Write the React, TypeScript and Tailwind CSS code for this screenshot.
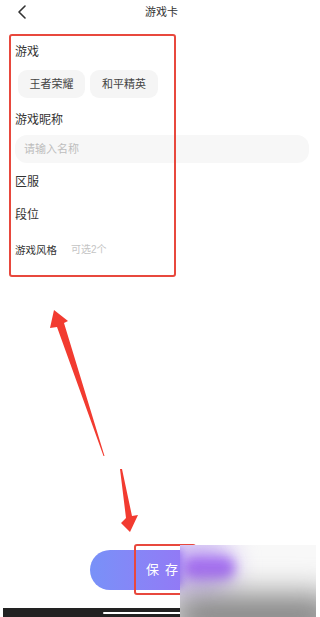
import React from "react";

const font = { fontFamily: '"Liberation Sans", "Noto Sans CJK SC", sans-serif' };

export default function App() {
  return (
    <div className="relative w-[316px] h-[617px] bg-white overflow-hidden flex flex-col" style={font}>
      {/* header */}
      <div className="h-[24px] flex items-center relative shrink-0">
        <svg className="ml-[17px]" width="10" height="14" viewBox="0 0 10 14">
          <path d="M8 1 L2 7 L8 13" fill="none" stroke="#333" strokeWidth="1.6" strokeLinecap="round" strokeLinejoin="round" />
        </svg>
        <div className="absolute left-[145px] top-0 h-[24px] flex items-center text-[11px] text-[#333]">游戏卡</div>
      </div>

      <div className="pl-[15px] pr-[7px] flex flex-col">
        <div className="mt-[20px] h-[16px] leading-[16px] text-[12px] text-[#333]">游戏</div>
        <div className="mt-[10px] flex gap-[5px] pl-[3px]">
          <div className="w-[67px] h-[28px] rounded-[9px] bg-[#f5f5f5] flex items-center justify-center text-[11px] text-[#444]">王者荣耀</div>
          <div className="w-[68px] h-[28px] rounded-[9px] bg-[#f5f5f5] flex items-center justify-center text-[11px] text-[#444]">和平精英</div>
        </div>
        <div className="mt-[14px] h-[16px] leading-[16px] text-[12px] text-[#333]">游戏昵称</div>
        <div className="mt-[7px] h-[28px] rounded-[12px] bg-[#f7f7f7] flex items-center pl-[9px] text-[11px] text-[#bdbdbd]">请输入名称</div>
        <div className="mt-[11px] h-[16px] leading-[16px] text-[12px] text-[#333]">区服</div>
        <div className="mt-[17px] h-[16px] leading-[16px] text-[12px] text-[#333]">段位</div>
        <div className="mt-[19px] h-[16px] leading-[16px] flex items-center">
          <span className="text-[10.5px] text-[#333]">游戏风格</span>
          <span className="ml-[14px] text-[10px] text-[#c4c4c4]">可选2个</span>
        </div>
      </div>

      {/* save button */}
      <div className="mt-[292px] h-[40px] flex pl-[90px]">
        <div className="w-[144px] h-[40px] rounded-full bg-gradient-to-r from-[#7891f8] to-[#9d6bf4] flex items-center justify-center text-white text-[13px] tracking-[6px] pl-[6px]">
          保存
        </div>
      </div>

      {/* bottom bar */}
      <div className="mt-[18px] h-[9px] ml-[3px] w-[200px] bg-[#222] flex items-center">
        <div className="ml-[100px] w-[100px] h-[2px] bg-white rounded-full" />
      </div>

      {/* red highlight boxes */}
      <div className="absolute left-[9px] top-[34px] w-[167px] h-[243px] border-2 border-[#e8483d] rounded-[3px]" />
      <div className="absolute left-[134px] top-[544px] w-[62px] h-[51px] border-2 border-[#e8483d] rounded-[3px]" />

      {/* arrows */}
      <svg className="absolute left-0 top-0" width="316" height="617" viewBox="0 0 316 617">
        <polygon points="54,310 68,321 64,323 104.5,456 103.5,456 57,327 50,328" fill="#f23b30" />
        <polygon points="120,469 122,469 132,516 138,515 130,532 121,523 126,518" fill="#f23b30" />
      </svg>

      {/* blurred watermark area */}
      <div className="absolute left-[180px] top-[545px] right-0 bottom-0 overflow-hidden bg-[#f8f8f8]">
        <div className="absolute left-[-20px] top-[-8px] w-[75px] h-[58px] bg-[#cdb8f3] blur-md rounded-full" />
        <div className="absolute left-[3px] top-[12px] w-[52px] h-[22px] bg-[#a46ff0] blur-[6px] rounded-full" />
        <div className="absolute left-[-20px] top-[4px] w-[22px] h-[38px] bg-[#9670f3] blur-[4px]" />
        <div className="absolute left-[-10px] bottom-[-20px] w-[170px] h-[42px] bg-[#7d7d7d] blur-lg rounded-full" />
      </div>
    </div>
  );
}
